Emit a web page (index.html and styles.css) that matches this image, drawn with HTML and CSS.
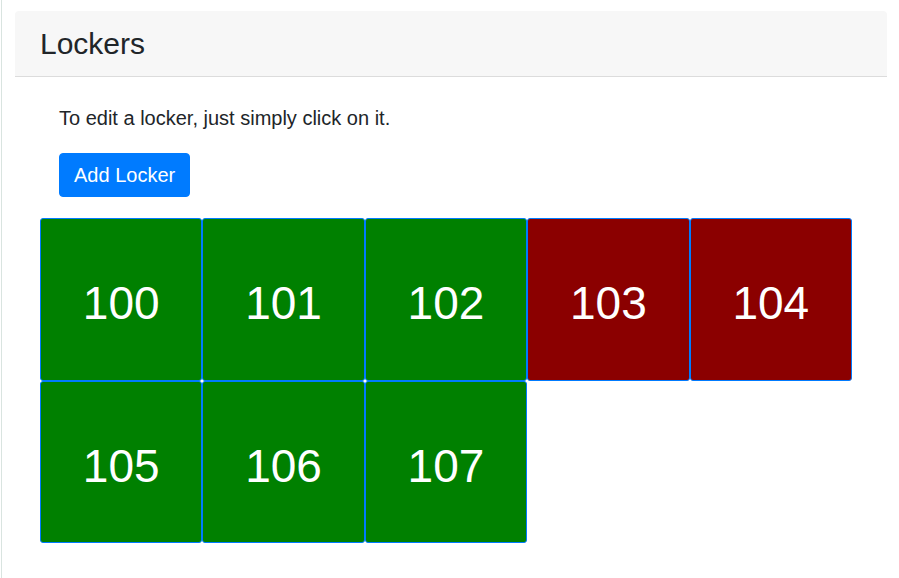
FILE: index.html
```html
<!DOCTYPE html>
<html>
<head>
<meta charset="utf-8">
<link rel="stylesheet" href="styles.css">
</head>
<body>
<div class="rail"></div>
<div class="page">
  <div class="card">
    <div class="card-header">Lockers</div>
    <div class="card-body">
      <p class="hint">To edit a locker, just simply click on it.</p>
      <button class="btn">Add Locker</button>
    </div>
    <div class="lockers">
      <div class="locker free">100</div>
      <div class="locker free">101</div>
      <div class="locker free">102</div>
      <div class="locker taken">103</div>
      <div class="locker taken">104</div>
      <div class="locker free">105</div>
      <div class="locker free">106</div>
      <div class="locker free">107</div>
    </div>
  </div>
</div>
</body>
</html>
```

FILE: styles.css
```css
html, body {
  margin: 0;
  padding: 0;
  background: #fff;
  font-family: "Liberation Sans", Arial, sans-serif;
  color: #212529;
}
body {
  display: flex;
  min-height: 578px;
}
.rail {
  width: 1px;
  margin-left: 1px;
  background: #d9e4e0;
  flex: none;
}
.page {
  flex: 1;
  padding: 11px 11px 0 13px;
}
.card {
  width: 872px;
}
.card-header {
  background: #f7f7f7;
  border-bottom: 1px solid #dcdcdc;
  border-radius: 4px 4px 0 0;
  height: 65px;
  box-sizing: content-box;
  padding: 0 0 0 25px;
  font-size: 30px;
  line-height: 65px;
}
.card-body {
  padding: 29px 0 0 44px;
}
.hint {
  margin: 0;
  font-size: 20px;
  line-height: 24px;
}
.btn {
  margin-top: 23px;
  display: block;
  background: #007bff;
  color: #fff;
  border: 1px solid #007bff;
  border-radius: 4px;
  font-family: inherit;
  font-size: 20px;
  line-height: 30px;
  height: 44px;
  padding: 0 14px;
}
.lockers {
  margin: 21px 0 0 25px;
  width: 812px;
  display: flex;
  flex-wrap: wrap;
}
.locker {
  width: 162.4px;
  height: 162.5px;
  box-sizing: border-box;
  border: 1px solid #007bff;
  border-radius: 3px;
  color: #fff;
  font-size: 46px;
  display: flex;
  align-items: center;
  justify-content: center;
  padding-top: 8px;
}
.free { background: #008000; }
.taken { background: #8b0000; }
```
